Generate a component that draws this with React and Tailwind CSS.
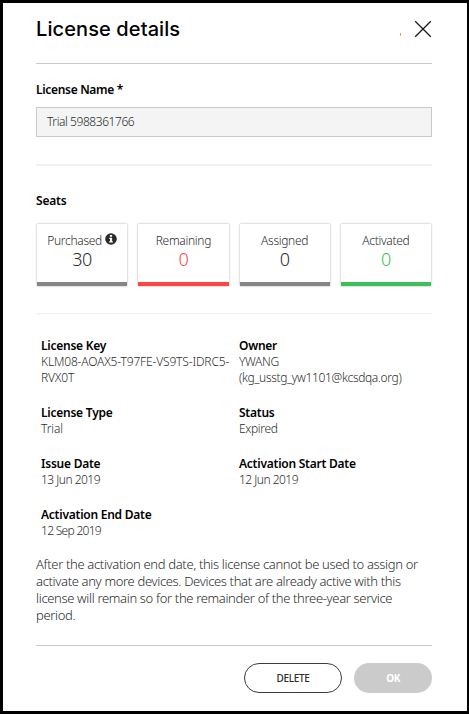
const seats = [
  { label: "Purchased", value: "30", info: true, text: "text-[#2b2b2b]", bar: "border-[#858585]" },
  { label: "Remaining", value: "0", text: "text-[#ff4545]", bar: "border-[#ff4545]" },
  { label: "Assigned", value: "0", text: "text-[#2b2b2b]", bar: "border-[#858585]" },
  { label: "Activated", value: "0", text: "text-[#3dbf59]", bar: "border-[#3dbf59]" },
];

function InfoIcon() {
  return (
    <svg viewBox="0 0 12 12" className="mt-[-4px] ml-[3px] size-3 shrink-0">
      <circle cx="6" cy="6" r="5.8" fill="#2b2b2b" />
      <path d="M4.9 2.1h2.2v1.7H4.9zM4.3 4.8h2.8v3.5h.8v1.2H4.2V8.3H5V6h-.7z" fill="#fff" />
    </svg>
  );
}

function SeatCard({ seat }) {
  return (
    <div className={`flex h-[62px] flex-1 flex-col items-center border-b-4 pt-[9px] shadow-[0_0_2px_#a8a8a8] ${seat.bar}`}>
      <div className="flex h-4 items-center text-[12px] leading-4 tracking-[-0.3px] whitespace-nowrap text-[#2b2b2b]">
        {seat.label}
        {seat.info && <InfoIcon />}
      </div>
      <div className={`h-6 text-[18px] leading-[21px] tracking-[-0.3px] ${seat.text}`}>{seat.value}</div>
    </div>
  );
}

function Detail({ label, children, track = "tracking-[-0.52px]" }) {
  return (
    <div className="text-[12px] leading-4 whitespace-nowrap">
      <div className="font-semibold tracking-[-0.24px] text-black">{label}</div>
      <div className={`text-[#2b2b2b] ${track}`}>{children}</div>
    </div>
  );
}

export default function App() {
  return (
    <div className="flex h-[714px] w-[469px] flex-col border-[3px] border-r-2 border-black bg-white pr-[35px] pl-[33px] font-['Noto_Sans',sans-serif] font-light">
      <header className="flex h-[61px] shrink-0 items-start border-b border-[#c9c9c9] pt-[14px]">
        <h1 className="font-[Inter,sans-serif] text-[20px] leading-6 font-medium tracking-[0.1px] text-black">License details</h1>
        <span className="mt-[16px] ml-auto h-[3px] w-px bg-[#e0a050]" />
        <svg viewBox="0 0 18 18" className="mt-[3px] ml-[13px] size-[18px]" fill="none" stroke="#1a1a1a" strokeWidth="1.3">
          <path d="M1.2 1.2l15.6 15.6M16.8 1.2L1.2 16.8" />
        </svg>
      </header>

      <label className="mt-[18px] h-4 text-[12px] leading-4 font-semibold tracking-[-0.32px] text-black">License Name *</label>
      <div className="mt-[9px] h-[30px] shrink-0 border border-[#c9c9c9] bg-[#f4f4f4] pl-[10px] text-[12px] leading-[27px] tracking-[-0.43px] text-[#2b2b2b]">
        Trial 5988361766
      </div>

      <section className="mt-[27px] border-t-2 border-[#f1f1f1] pt-[27px]">
        <h2 className="h-4 text-[12px] leading-4 font-semibold tracking-[-0.2px] text-black">Seats</h2>
        <div className="mt-[15px] flex gap-[11px] px-px">
          {seats.map((seat) => (
            <SeatCard key={seat.label} seat={seat} />
          ))}
        </div>
      </section>

      <section className="mt-[27px] grid grid-cols-[198px_1fr] gap-y-[19px] border-t border-[#f1f1f1] pt-[24px] pl-[5px]">
        <Detail label="License Key" track="tracking-[-0.16px]">
          KLM08-AOAX5-T97FE-VS9TS-IDRC5-
          <br />
          RVX0T
        </Detail>
        <Detail label="Owner" track="tracking-[-0.34px]">
          YWANG
          <br />
          (kg_usstg_yw1101@kcsdqa.org)
        </Detail>
        <Detail label="License Type" track="tracking-[-0.1px]">Trial</Detail>
        <Detail label="Status" track="tracking-[-0.35px]">Expired</Detail>
        <Detail label="Issue Date">13 Jun 2019</Detail>
        <Detail label="Activation Start Date">12 Jun 2019</Detail>
        <Detail label="Activation End Date" track="tracking-[-0.7px]">12 Sep 2019</Detail>
      </section>

      <p className="mt-[17px] h-[68px] text-[13px] leading-[17px] tracking-[-0.34px] whitespace-nowrap text-[#2b2b2b]">
        After the activation end date, this license cannot be used to assign or
        <br />
        activate any more devices. Devices that are already active with this
        <br />
        license will remain so for the remainder of the three-year service
        <br />
        period.
      </p>

      <footer className="mt-[21px] flex justify-end gap-3 border-t border-[#c9c9c9] pt-[17px]">
        <button className="h-[30px] w-[98px] rounded-full border border-[#3c3c3c] pb-px text-[10px] leading-none font-medium tracking-[-0.3px] text-[#2b2b2b]">DELETE</button>
        <button className="h-[30px] w-[78px] rounded-full bg-[#cbcbcb] pb-px text-[10px] leading-none font-bold tracking-[-0.4px] text-white">OK</button>
      </footer>
    </div>
  );
}
